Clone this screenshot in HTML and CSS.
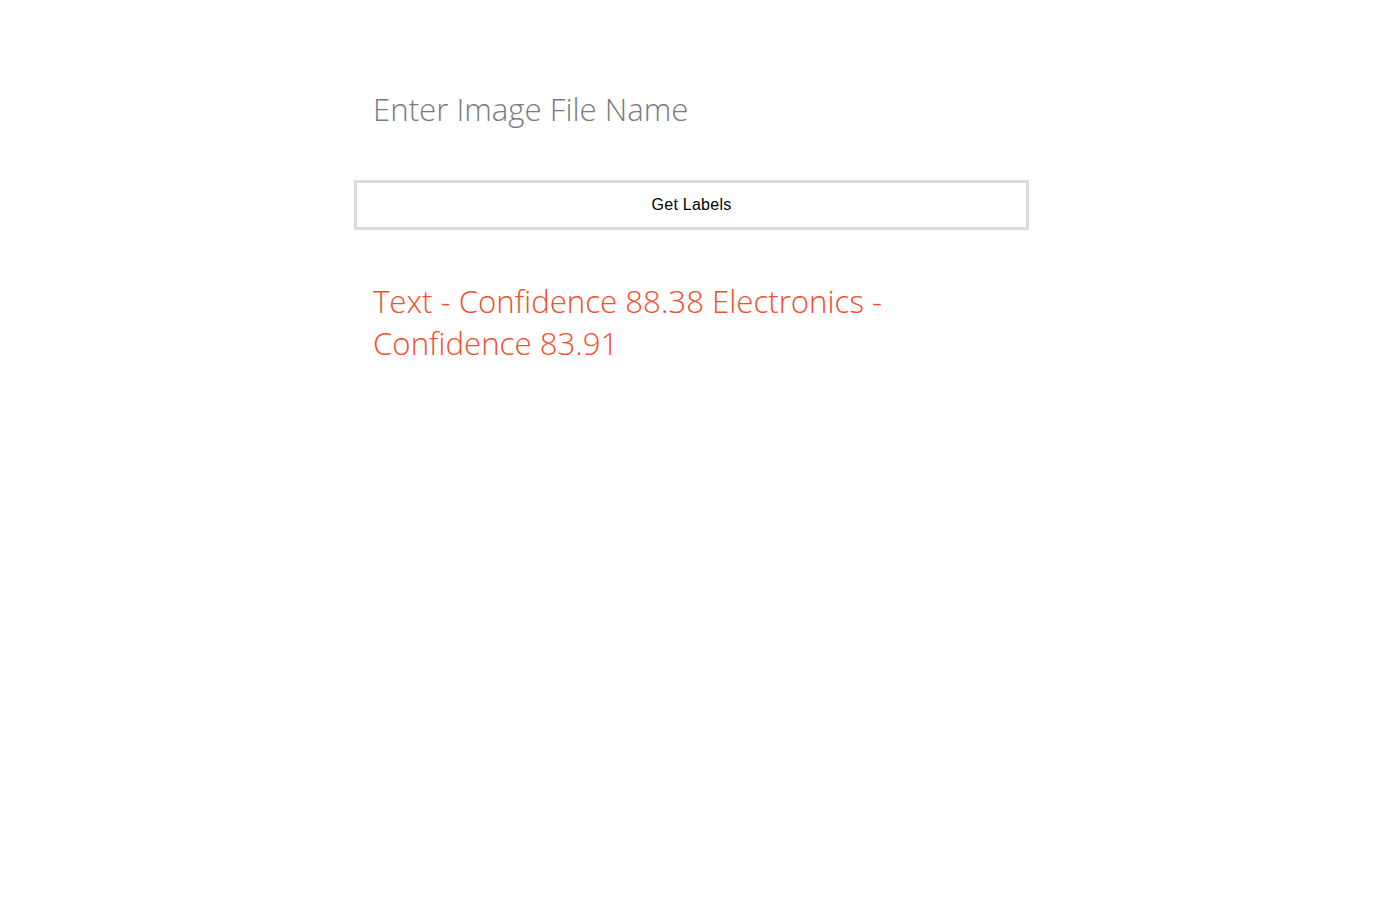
FILE: index.html
```html
<!DOCTYPE html>
<html lang="en">
<head>
<meta charset="utf-8">
<title>Image Labels</title>
<link rel="stylesheet" href="styles.css">
</head>
<body>
<main class="app">
  <input class="file-input" type="text" placeholder="Enter Image File Name">
  <button class="get-btn" type="button">Get Labels</button>
  <p class="result">Text - Confidence 88.38 Electronics - Confidence 83.91</p>
</main>
</body>
</html>
```
FILE: styles.css
```css
html, body {
  margin: 0;
  padding: 0;
  background: #fff;
}
.app {
  width: 675px;
  margin-left: 354px;
  padding-top: 84px;
  display: flex;
  flex-direction: column;
}
.file-input {
  border: none;
  outline: none;
  background: transparent;
  font-family: "Open Sans", sans-serif;
  font-weight: 300;
  font-size: 31.2px;
  line-height: 50px;
  height: 50px;
  padding: 0 19px;
  margin: 0;
  color: #333;
}
.file-input::placeholder {
  color: #787b82;
  opacity: 1;
}
.get-btn {
  margin-top: 46px;
  height: 50px;
  border: 3px solid #dcdcdc;
  background: #fff;
  font-family: "Liberation Sans", Arial, sans-serif;
  font-size: 16px;
  letter-spacing: 0.25px;
  color: #000;
  cursor: pointer;
  padding: 0;
}
.result {
  margin: 50px 0 0;
  padding: 0 18px 0 19px;
  font-family: "Open Sans", sans-serif;
  font-weight: 300;
  font-size: 31.2px;
  line-height: 42px;
  color: #ef4f2c;
}
```
